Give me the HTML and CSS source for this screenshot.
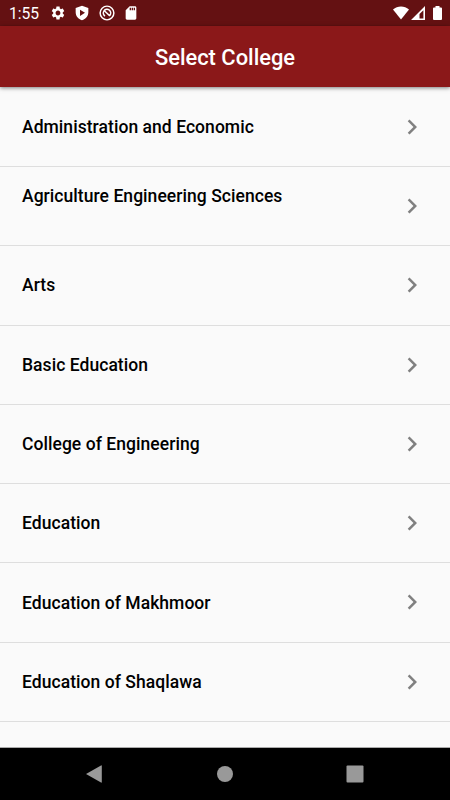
FILE: index.html
```html
<!DOCTYPE html>
<html lang="en">
<head>
<meta charset="utf-8">
<title>Select College</title>
<link rel="stylesheet" href="styles.css">
</head>
<body>
<svg class="defs" aria-hidden="true">
  <symbol id="chevron" viewBox="0 0 24 24"><path d="M10 6 8.59 7.41 13.17 12l-4.58 4.59L10 18l6-6z"/></symbol>
</svg>
<div class="screen">
  <div class="status">
    <span class="time">1:55</span>
    <div class="notices">
      <svg class="icon" viewBox="0 0 24 24"><path d="M19.14 12.94c.04-.3.06-.61.06-.94 0-.32-.02-.64-.07-.94l2.03-1.58c.18-.14.23-.41.12-.61l-1.92-3.32c-.12-.22-.37-.29-.59-.22l-2.39.96c-.5-.38-1.03-.7-1.62-.94l-.36-2.54c-.04-.24-.24-.41-.48-.41h-3.84c-.24 0-.43.17-.47.41l-.36 2.54c-.59.24-1.13.57-1.62.94l-2.39-.96c-.22-.08-.47 0-.59.22L2.74 8.87c-.12.21-.08.47.12.61l2.03 1.58c-.05.3-.09.63-.09.94s.02.64.07.94l-2.03 1.58c-.18.14-.23.41-.12.61l1.92 3.32c.12.22.37.29.59.22l2.39-.96c.5.38 1.03.7 1.62.94l.36 2.54c.05.24.24.41.48.41h3.84c.24 0 .44-.17.47-.41l.36-2.54c.59-.24 1.13-.56 1.62-.94l2.39.96c.22.08.47 0 .59-.22l1.92-3.32c.12-.22.07-.47-.12-.61l-2.01-1.58zM12 15.6c-1.98 0-3.6-1.62-3.6-3.6s1.62-3.6 3.6-3.6 3.6 1.62 3.6 3.6-1.62 3.6-3.6 3.6z"/></svg>
      <svg class="icon" viewBox="0 0 24 24"><path fill-rule="evenodd" d="M12 1 2.500 4.600V11c0 5.600 4 10.500 9.500 12 5.500-1.500 9.500-6.400 9.500-12V4.600zM9 7l7.500 4.800L9 16.500z"/></svg>
      <svg class="icon outline" viewBox="0 0 24 24"><circle cx="12" cy="12" r="10.300"/><path d="M9 16.700A5.600 5.600 0 1 1 16.200 15.700M8 8.500l8.500 8M10 10.500l5.500 5.200"/></svg>
      <svg class="icon" viewBox="0 0 24 24"><path d="M18 2h-8L4 8v12c0 1.100.9 2 2 2h12c1.100 0 2-.9 2-2V4c0-1.100-.9-2-2-2zm-6 6h-2V4h2v4zm3 0h-2V4h2v4zm3 0h-2V4h2v4z"/></svg>
    </div>
    <div class="system">
      <svg class="wifi" viewBox="0 0 16 14"><path d="M0 3.600C4.500-.5 11.500-.5 16 3.600L8 13.500z"/></svg>
      <svg class="signal" viewBox="0 0 14 14"><path fill-rule="evenodd" d="M14 0v14H0zM12.400 4.200 8.500 8.100v4.500h3.900z"/></svg>
      <svg class="battery" viewBox="0 0 9 14"><path d="M2.500 0h4v1.500H8q1 0 1 1V13q0 1-1 1H1q-1 0-1-1V2.500q0-1 1-1h1.500z"/></svg>
    </div>
  </div>
  <header class="appbar"><h1>Select College</h1></header>
  <ul class="list">
    <li><span>Administration and Economic</span><svg class="chevron"><use href="#chevron"/></svg></li>
    <li><span class="raised">Agriculture Engineering Sciences</span><svg class="chevron"><use href="#chevron"/></svg></li>
    <li><span>Arts</span><svg class="chevron"><use href="#chevron"/></svg></li>
    <li><span>Basic Education</span><svg class="chevron"><use href="#chevron"/></svg></li>
    <li><span>College of Engineering</span><svg class="chevron"><use href="#chevron"/></svg></li>
    <li><span>Education</span><svg class="chevron"><use href="#chevron"/></svg></li>
    <li><span>Education of Makhmoor</span><svg class="chevron"><use href="#chevron"/></svg></li>
    <li><span>Education of Shaqlawa</span><svg class="chevron"><use href="#chevron"/></svg></li>
  </ul>
  <nav class="navbar">
    <svg viewBox="0 0 18 18"><path d="M1 9 16 .5Q16.800 0 16.800 1v16q0 1-.8.5z"/></svg>
    <svg viewBox="0 0 18 18"><circle cx="9" cy="9" r="8"/></svg>
    <svg viewBox="0 0 18 18"><rect x=".5" y=".5" width="17" height="17" rx="1"/></svg>
  </nav>
</div>
</body>
</html>
```

FILE: styles.css
```css
* { box-sizing: border-box; }
body { margin: 0; font-family: Roboto, "Liberation Sans", sans-serif; }
.defs { display: none; }
.screen {
  display: flex;
  flex-direction: column;
  width: 450px;
  height: 800px;
  overflow: hidden;
  background: #fafafa;
}
svg { display: block; fill: currentColor; }
.status {
  display: flex;
  flex: none;
  align-items: center;
  height: 26px;
  padding: 0 8px 0 9px;
  background: #641112;
  color: #fff;
}
.time { width: 41px; font-size: 15.600px; line-height: 26px; padding-top: 2px; }
.notices { display: flex; gap: 8.300px; }
.icon { width: 16px; height: 16px; }
.outline { fill: none; stroke: currentColor; stroke-width: 2.2; }
.system { display: flex; align-items: center; margin-left: auto; }
.wifi { width: 16px; height: 14px; margin-right: 2px; }
.signal { width: 14px; height: 14px; margin-right: 8px; }
.battery { width: 9px; height: 14px; }
.appbar {
  display: flex;
  flex: none;
  align-items: center;
  justify-content: center;
  height: 61px;
  padding-top: 3px;
  background: #8b1819;
  color: #fff;
  box-shadow: 0 1px 4px rgba(0, 0, 0, .5);
  z-index: 1;
}
h1 { margin: 0; font-size: 21.9px; font-weight: 500; line-height: 26px; }
.list { flex: 1; min-height: 0; margin: 0; padding: .8px 0 0; list-style: none; overflow: hidden; }
.list li {
  display: flex;
  align-items: center;
  justify-content: space-between;
  height: 79.27px;
  padding: 1px 23px 0 22px;
  border-bottom: 1px solid #dedede;
  color: #000;
  font-size: 17.5px;
  font-weight: 500;
  line-height: 21px;
  letter-spacing: .05px;
}
.raised { padding-bottom: 20px; }
.chevron { width: 30px; height: 30px; margin-bottom: 1.2px; color: #808080; }
.navbar {
  display: flex;
  flex: none;
  align-items: center;
  justify-content: space-between;
  height: 53px;
  padding: 0 86px 0 85px;
  border-top: 1px solid #aaa;
  background: #000;
  color: #999;
}
.navbar svg { width: 18px; height: 18px; }
```
